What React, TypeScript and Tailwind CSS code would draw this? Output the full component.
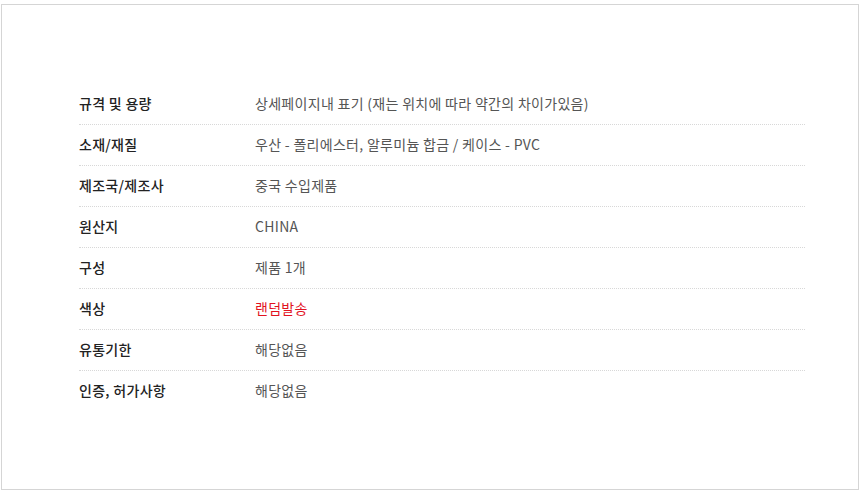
const rows: { label: string; value: string; red?: boolean }[] = [
  { label: "규격 및 용량", value: "상세페이지내 표기 (재는 위치에 따라 약간의 차이가있음)" },
  { label: "소재/재질", value: "우산 - 폴리에스터, 알루미늄 합금 / 케이스 - PVC" },
  { label: "제조국/제조사", value: "중국 수입제품" },
  { label: "원산지", value: "CHINA" },
  { label: "구성", value: "제품 1개" },
  { label: "색상", value: "랜덤발송", red: true },
  { label: "유통기한", value: "해당없음" },
  { label: "인증, 허가사항", value: "해당없음" },
]

const App = () => {
  return (
    <div className="w-[860px] h-[501px] bg-white pt-[4px] font-['Noto_Sans_CJK_KR','Noto_Sans',sans-serif]">
      <div className="h-[486px] ml-[1px] mr-[1px] border border-[#d5d5d5] pt-[79px] pl-[77px] pr-[53px]">
        <div className="flex flex-col">
          {rows.map((row, i) => (
            <div
              key={row.label}
              className={`flex items-center h-[41px] pb-[2px] ${i < rows.length - 1 ? "border-b border-dotted border-[#d8d8d8]" : ""}`}
            >
              <div className="w-[176px] text-[14px] tracking-[0.3px] text-[#222] font-medium">{row.label}</div>
              <div className={`text-[14px] tracking-[0.3px] ${row.red ? "text-[#e2131f]" : "text-[#555]"}`}>{row.value}</div>
            </div>
          ))}
        </div>
      </div>
    </div>
  )
}

export default App
